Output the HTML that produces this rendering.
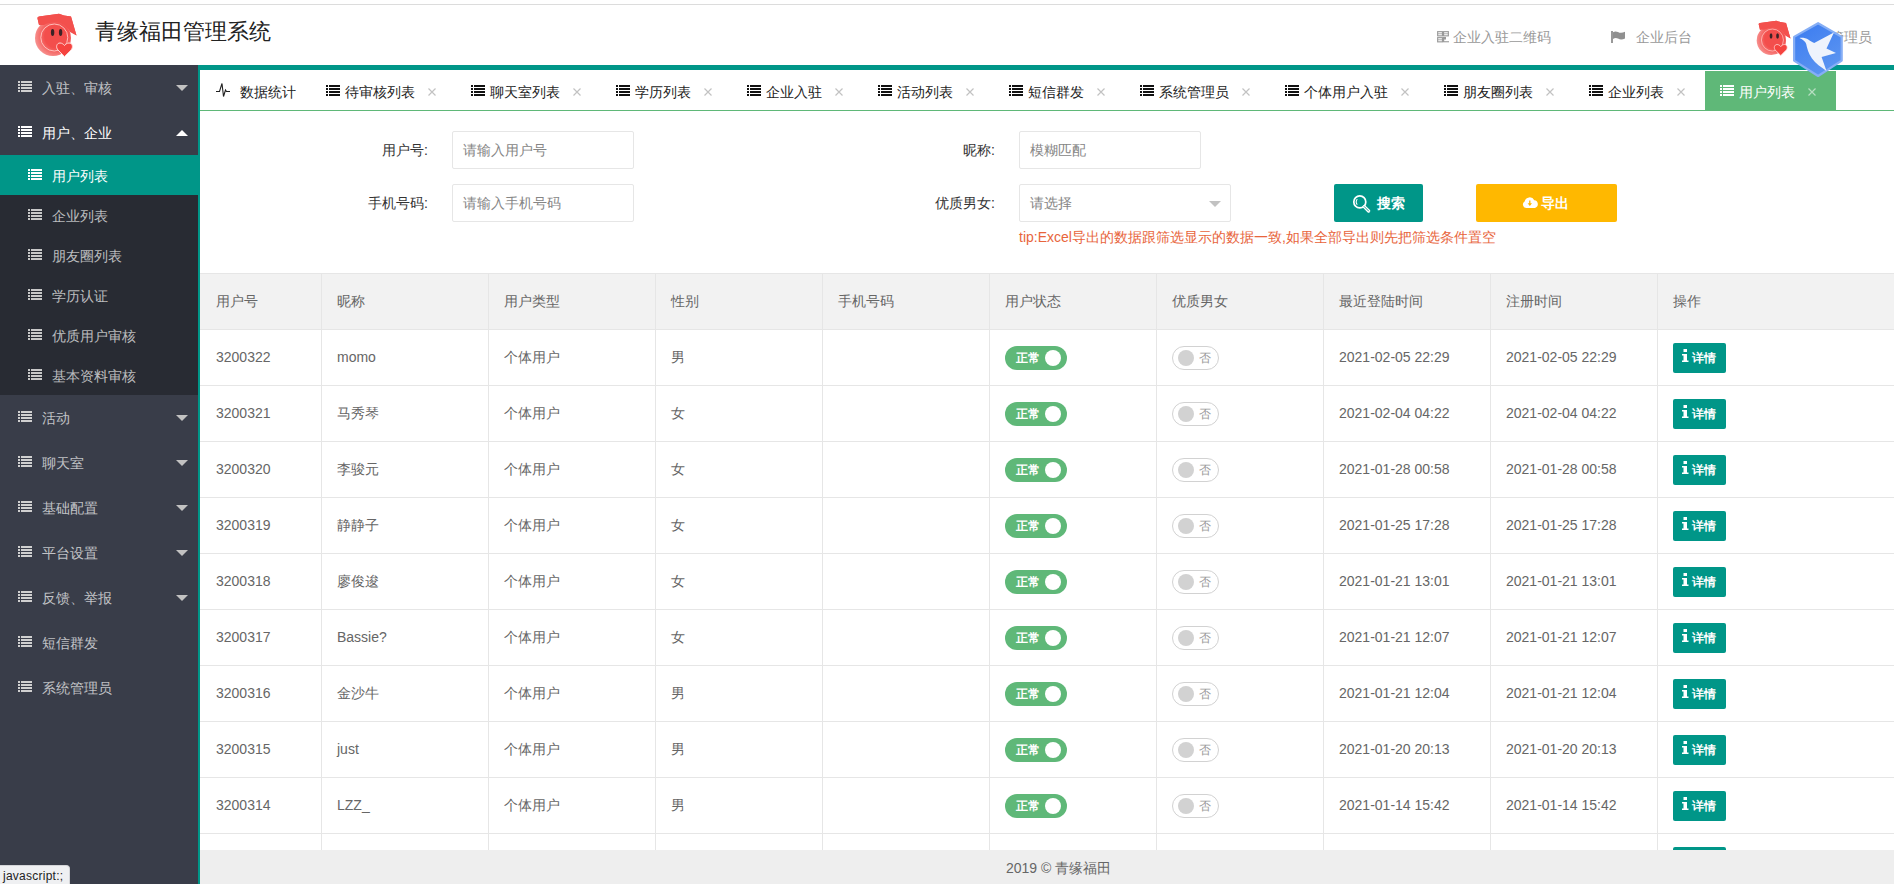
<!DOCTYPE html>
<html><head><meta charset="utf-8">
<style>
*{box-sizing:border-box;margin:0;padding:0}
html,body{width:1894px;height:884px;overflow:hidden;background:#fff;font-family:"Liberation Sans",sans-serif;font-size:14px;color:#333}
.abs{position:absolute}
#topline{position:absolute;left:0;top:4px;width:1894px;height:1px;background:#dcdcdc}
#title{position:absolute;left:95px;top:17px;font-size:22px;line-height:30px;color:#222;white-space:nowrap}
.hnav{position:absolute;top:28px;line-height:18px;color:#999;white-space:nowrap}
#side{position:absolute;left:0;top:65px;width:198px;height:819px;background:#393D49}
#tealL{position:absolute;left:198px;top:65px;width:2px;height:819px;background:#009688}
#tealT{position:absolute;left:198px;top:65px;width:1696px;height:5px;background:#009688}
.si{position:absolute;left:0;width:198px;height:45px;line-height:45px;color:rgba(255,255,255,.7);white-space:nowrap}
.si .ic{position:absolute;left:18px;top:16px}
.si .tx{position:absolute;left:42px;top:1px}
.si .ar{position:absolute;left:176px;top:20px;width:0;height:0;border-left:6px solid transparent;border-right:6px solid transparent;border-top:6px solid #c2c2c2}
.si .ar.up{border-top:0;border-bottom:6px solid #fff}
#child{position:absolute;left:0;top:155px;width:198px;height:240px;background:#282B33}
.ci{position:absolute;left:0;width:198px;height:40px;line-height:40px;color:rgba(255,255,255,.7);white-space:nowrap}
.ci .ic{position:absolute;left:28px;top:14px}
.ci .tx{position:absolute;left:52px;top:0.5px}
.ci.on{background:#009688;color:#fff}
#tabline{position:absolute;left:200px;top:110px;width:1694px;height:1px;background:#5FB878}
.tab{position:absolute;top:71px;height:39px;line-height:39px;color:#222;white-space:nowrap}
.tab .ic{position:absolute;left:15px;top:14px}
.tab .tx{position:absolute;left:34px;top:2px}
.tab .cl{position:absolute;top:17px;width:8px;height:8px}
.tab.on{background:#5FB878;color:#fff}
.lbl{position:absolute;line-height:20px;color:#333;white-space:nowrap;text-align:right}
.inp{position:absolute;height:38px;border:1px solid #e6e6e6;border-radius:2px;background:#fff;color:#858585;line-height:36px;padding-left:10px;white-space:nowrap}
.btn{position:absolute;top:184px;height:38px;border-radius:2px;color:#fff;line-height:38px;white-space:nowrap;font-weight:bold}
#tip{position:absolute;left:1019px;top:228px;line-height:18px;color:#e8653c;white-space:nowrap}
#tbl{position:absolute;left:200px;top:273px;width:1694px;height:577px;overflow:hidden}
#thead{position:absolute;left:0;top:0;width:1694px;height:57px;background:#f2f2f2;border-top:1px solid #e6e6e6;border-bottom:1px solid #e6e6e6}
.row{position:absolute;left:0;width:1694px;height:56px;border-bottom:1px solid #e6e6e6}
.vl{position:absolute;top:0;width:1px;height:577px;background:#e6e6e6}
.cell{position:absolute;line-height:20px;color:#666;white-space:nowrap}
.sw1{position:absolute;left:805px;width:62px;height:24px;border-radius:20px;background:#5FB878}
.sw1 em{position:absolute;left:11px;top:0;font-style:normal;font-size:12px;line-height:24px;color:#fff;font-weight:bold}
.sw1 i{position:absolute;left:40px;top:4px;width:16px;height:16px;border-radius:50%;background:#fff}
.sw2{position:absolute;left:972px;width:47px;height:24px;border-radius:20px;border:1px solid #d2d2d2;background:#fff}
.sw2 i{position:absolute;left:5px;top:3px;width:16px;height:16px;border-radius:50%;background:#d2d2d2}
.sw2 em{position:absolute;left:26px;top:0;font-style:normal;font-size:12px;line-height:22px;color:#999}
.det{position:absolute;left:1473px;width:53px;height:30px;border-radius:2px;background:#009688;color:#fff;font-size:12px;line-height:30px;font-weight:bold}
.det .ii{position:absolute;left:9px;top:6px}
.det span{position:absolute;left:19px;top:0}
#footer{position:absolute;left:200px;top:850px;width:1694px;height:34px;background:#eee;color:#666;line-height:34px}
#status{position:absolute;left:0;top:865px;width:70px;height:19px;padding:0 0 0 3px;background:#eff0f2;border:1px solid #d4d5d8;border-left:0;border-bottom:0;border-top-right-radius:4px;font-size:12px;letter-spacing:0.25px;line-height:20px;color:#222}
</style></head><body>
<div id="topline"></div>
<svg class="abs" style="left:28px;top:8px" width="54" height="54" viewBox="0 0 54 54"><defs><radialGradient id="fga" cx="0.6" cy="0.45" r="0.6"><stop offset="0.55" stop-color="#f34e4c"/><stop offset="1" stop-color="#f7908e"/></radialGradient></defs><path d="M9.5 10.5 Q9 9 11 8.6 L31 5.8 L36 7.5 L43 8.6 L48.5 27.5 L42 24 C38 16 28 12 18 15 L11 17 Z" fill="#f3504d"/><circle cx="25" cy="30" r="18" fill="url(#fga)"/><path d="M9.5 10.5 Q9 9 11 8.6 L31 5.8 L36 7.5 L43 8.6 L48.5 27.5 L41 22 C36 14 26 12 16 17 L11 17 Z" fill="#f3504d"/><circle cx="26.3" cy="29.5" r="13.5" fill="none" stroke="#ffc9c6" stroke-width="0.9"/><ellipse cx="24.6" cy="24.5" rx="1.7" ry="3.4" fill="#3b2326"/><ellipse cx="32.6" cy="24.5" rx="1.7" ry="3.4" fill="#3b2326"/><path d="M36.5 48.5 L30 42 C27.5 39.5 28.5 35 32 35 C34 35 35.5 36.3 36.5 37.5 C37.5 36.3 39 35 41 35 C44.5 35 45.5 39.5 43 42 Z" fill="#f5433f" stroke="#ffd6d4" stroke-width="1"/></svg>
<div id="title">青缘福田管理系统</div>
<svg class="abs" style="left:1437px;top:31px" width="12" height="12" viewBox="0 0 12 12"><g fill="none" stroke="#9a9a9a" stroke-width="1.15"><rect x="0.65" y="0.65" width="4.8" height="4.2"/><rect x="6.55" y="0.65" width="4.8" height="4.2"/><rect x="0.65" y="6.65" width="4.8" height="4.2"/></g><g fill="#9a9a9a"><rect x="1" y="2.4" width="4" height="0.8"/><rect x="7" y="2.4" width="4" height="0.8"/><rect x="1" y="8.4" width="4" height="0.8"/><rect x="6" y="6" width="3" height="2.5"/><rect x="6" y="10.2" width="6" height="1.1"/><rect x="6" y="6" width="1.2" height="5"/></g></svg>
<div class="hnav" style="left:1453px">企业入驻二维码</div>
<svg class="abs" style="left:1611px;top:31px" width="15" height="12" viewBox="0 0 15 12"><rect x="0" y="0" width="2" height="12" fill="#999"/><path d="M2 1.2 Q4.5 -0.3 7 1 Q10 2.8 14 0.8 L14 7.6 Q10 9.6 7 7.6 Q4.5 6.4 2 8 Z" fill="#909090"/></svg>
<div class="hnav" style="left:1636px">企业后台</div>
<svg class="abs" style="left:1751px;top:16px" width="44" height="44" viewBox="0 0 54 54"><defs><radialGradient id="fgb" cx="0.6" cy="0.45" r="0.6"><stop offset="0.55" stop-color="#f34e4c"/><stop offset="1" stop-color="#f7908e"/></radialGradient></defs><path d="M9.5 10.5 Q9 9 11 8.6 L31 5.8 L36 7.5 L43 8.6 L48.5 27.5 L42 24 C38 16 28 12 18 15 L11 17 Z" fill="#f3504d"/><circle cx="25" cy="30" r="18" fill="url(#fgb)"/><path d="M9.5 10.5 Q9 9 11 8.6 L31 5.8 L36 7.5 L43 8.6 L48.5 27.5 L41 22 C36 14 26 12 16 17 L11 17 Z" fill="#f3504d"/><circle cx="26.3" cy="29.5" r="13.5" fill="none" stroke="#ffc9c6" stroke-width="0.9"/><ellipse cx="24.6" cy="24.5" rx="1.7" ry="3.4" fill="#3b2326"/><ellipse cx="32.6" cy="24.5" rx="1.7" ry="3.4" fill="#3b2326"/><path d="M36.5 48.5 L30 42 C27.5 39.5 28.5 35 32 35 C34 35 35.5 36.3 36.5 37.5 C37.5 36.3 39 35 41 35 C44.5 35 45.5 39.5 43 42 Z" fill="#f5433f" stroke="#ffd6d4" stroke-width="1"/></svg>
<div class="hnav" style="left:1830px">管理员</div>
<div id="side"></div>
<div class="si" style="top:65px;"><svg class="ic" width="14" height="11" viewBox="0 0 14 11"><rect x="0" y="0" width="2" height="2" fill="#d0d0d0"/><rect x="3" y="0" width="11" height="2" fill="#d0d0d0"/><rect x="0" y="3" width="2" height="2" fill="#d0d0d0"/><rect x="3" y="3" width="11" height="2" fill="#d0d0d0"/><rect x="0" y="6" width="2" height="2" fill="#d0d0d0"/><rect x="3" y="6" width="11" height="2" fill="#d0d0d0"/><rect x="0" y="9" width="2" height="2" fill="#d0d0d0"/><rect x="3" y="9" width="11" height="2" fill="#d0d0d0"/></svg><span class="tx">入驻、审核</span><i class="ar "></i></div>
<div class="si" style="top:110px;color:#fff"><svg class="ic" width="14" height="11" viewBox="0 0 14 11"><rect x="0" y="0" width="2" height="2" fill="#fff"/><rect x="3" y="0" width="11" height="2" fill="#fff"/><rect x="0" y="3" width="2" height="2" fill="#fff"/><rect x="3" y="3" width="11" height="2" fill="#fff"/><rect x="0" y="6" width="2" height="2" fill="#fff"/><rect x="3" y="6" width="11" height="2" fill="#fff"/><rect x="0" y="9" width="2" height="2" fill="#fff"/><rect x="3" y="9" width="11" height="2" fill="#fff"/></svg><span class="tx">用户、企业</span><i class="ar up"></i></div>
<div id="child"></div>
<div class="ci on" style="top:155px"><svg class="ic" width="14" height="11" viewBox="0 0 14 11"><rect x="0" y="0" width="2" height="2" fill="#fff"/><rect x="3" y="0" width="11" height="2" fill="#fff"/><rect x="0" y="3" width="2" height="2" fill="#fff"/><rect x="3" y="3" width="11" height="2" fill="#fff"/><rect x="0" y="6" width="2" height="2" fill="#fff"/><rect x="3" y="6" width="11" height="2" fill="#fff"/><rect x="0" y="9" width="2" height="2" fill="#fff"/><rect x="3" y="9" width="11" height="2" fill="#fff"/></svg><span class="tx">用户列表</span></div>
<div class="ci" style="top:195px"><svg class="ic" width="14" height="11" viewBox="0 0 14 11"><rect x="0" y="0" width="2" height="2" fill="#c8c8c8"/><rect x="3" y="0" width="11" height="2" fill="#c8c8c8"/><rect x="0" y="3" width="2" height="2" fill="#c8c8c8"/><rect x="3" y="3" width="11" height="2" fill="#c8c8c8"/><rect x="0" y="6" width="2" height="2" fill="#c8c8c8"/><rect x="3" y="6" width="11" height="2" fill="#c8c8c8"/><rect x="0" y="9" width="2" height="2" fill="#c8c8c8"/><rect x="3" y="9" width="11" height="2" fill="#c8c8c8"/></svg><span class="tx">企业列表</span></div>
<div class="ci" style="top:235px"><svg class="ic" width="14" height="11" viewBox="0 0 14 11"><rect x="0" y="0" width="2" height="2" fill="#c8c8c8"/><rect x="3" y="0" width="11" height="2" fill="#c8c8c8"/><rect x="0" y="3" width="2" height="2" fill="#c8c8c8"/><rect x="3" y="3" width="11" height="2" fill="#c8c8c8"/><rect x="0" y="6" width="2" height="2" fill="#c8c8c8"/><rect x="3" y="6" width="11" height="2" fill="#c8c8c8"/><rect x="0" y="9" width="2" height="2" fill="#c8c8c8"/><rect x="3" y="9" width="11" height="2" fill="#c8c8c8"/></svg><span class="tx">朋友圈列表</span></div>
<div class="ci" style="top:275px"><svg class="ic" width="14" height="11" viewBox="0 0 14 11"><rect x="0" y="0" width="2" height="2" fill="#c8c8c8"/><rect x="3" y="0" width="11" height="2" fill="#c8c8c8"/><rect x="0" y="3" width="2" height="2" fill="#c8c8c8"/><rect x="3" y="3" width="11" height="2" fill="#c8c8c8"/><rect x="0" y="6" width="2" height="2" fill="#c8c8c8"/><rect x="3" y="6" width="11" height="2" fill="#c8c8c8"/><rect x="0" y="9" width="2" height="2" fill="#c8c8c8"/><rect x="3" y="9" width="11" height="2" fill="#c8c8c8"/></svg><span class="tx">学历认证</span></div>
<div class="ci" style="top:315px"><svg class="ic" width="14" height="11" viewBox="0 0 14 11"><rect x="0" y="0" width="2" height="2" fill="#c8c8c8"/><rect x="3" y="0" width="11" height="2" fill="#c8c8c8"/><rect x="0" y="3" width="2" height="2" fill="#c8c8c8"/><rect x="3" y="3" width="11" height="2" fill="#c8c8c8"/><rect x="0" y="6" width="2" height="2" fill="#c8c8c8"/><rect x="3" y="6" width="11" height="2" fill="#c8c8c8"/><rect x="0" y="9" width="2" height="2" fill="#c8c8c8"/><rect x="3" y="9" width="11" height="2" fill="#c8c8c8"/></svg><span class="tx">优质用户审核</span></div>
<div class="ci" style="top:355px"><svg class="ic" width="14" height="11" viewBox="0 0 14 11"><rect x="0" y="0" width="2" height="2" fill="#c8c8c8"/><rect x="3" y="0" width="11" height="2" fill="#c8c8c8"/><rect x="0" y="3" width="2" height="2" fill="#c8c8c8"/><rect x="3" y="3" width="11" height="2" fill="#c8c8c8"/><rect x="0" y="6" width="2" height="2" fill="#c8c8c8"/><rect x="3" y="6" width="11" height="2" fill="#c8c8c8"/><rect x="0" y="9" width="2" height="2" fill="#c8c8c8"/><rect x="3" y="9" width="11" height="2" fill="#c8c8c8"/></svg><span class="tx">基本资料审核</span></div>
<div class="si" style="top:395px"><svg class="ic" width="14" height="11" viewBox="0 0 14 11"><rect x="0" y="0" width="2" height="2" fill="#d0d0d0"/><rect x="3" y="0" width="11" height="2" fill="#d0d0d0"/><rect x="0" y="3" width="2" height="2" fill="#d0d0d0"/><rect x="3" y="3" width="11" height="2" fill="#d0d0d0"/><rect x="0" y="6" width="2" height="2" fill="#d0d0d0"/><rect x="3" y="6" width="11" height="2" fill="#d0d0d0"/><rect x="0" y="9" width="2" height="2" fill="#d0d0d0"/><rect x="3" y="9" width="11" height="2" fill="#d0d0d0"/></svg><span class="tx">活动</span><i class="ar"></i></div>
<div class="si" style="top:440px"><svg class="ic" width="14" height="11" viewBox="0 0 14 11"><rect x="0" y="0" width="2" height="2" fill="#d0d0d0"/><rect x="3" y="0" width="11" height="2" fill="#d0d0d0"/><rect x="0" y="3" width="2" height="2" fill="#d0d0d0"/><rect x="3" y="3" width="11" height="2" fill="#d0d0d0"/><rect x="0" y="6" width="2" height="2" fill="#d0d0d0"/><rect x="3" y="6" width="11" height="2" fill="#d0d0d0"/><rect x="0" y="9" width="2" height="2" fill="#d0d0d0"/><rect x="3" y="9" width="11" height="2" fill="#d0d0d0"/></svg><span class="tx">聊天室</span><i class="ar"></i></div>
<div class="si" style="top:485px"><svg class="ic" width="14" height="11" viewBox="0 0 14 11"><rect x="0" y="0" width="2" height="2" fill="#d0d0d0"/><rect x="3" y="0" width="11" height="2" fill="#d0d0d0"/><rect x="0" y="3" width="2" height="2" fill="#d0d0d0"/><rect x="3" y="3" width="11" height="2" fill="#d0d0d0"/><rect x="0" y="6" width="2" height="2" fill="#d0d0d0"/><rect x="3" y="6" width="11" height="2" fill="#d0d0d0"/><rect x="0" y="9" width="2" height="2" fill="#d0d0d0"/><rect x="3" y="9" width="11" height="2" fill="#d0d0d0"/></svg><span class="tx">基础配置</span><i class="ar"></i></div>
<div class="si" style="top:530px"><svg class="ic" width="14" height="11" viewBox="0 0 14 11"><rect x="0" y="0" width="2" height="2" fill="#d0d0d0"/><rect x="3" y="0" width="11" height="2" fill="#d0d0d0"/><rect x="0" y="3" width="2" height="2" fill="#d0d0d0"/><rect x="3" y="3" width="11" height="2" fill="#d0d0d0"/><rect x="0" y="6" width="2" height="2" fill="#d0d0d0"/><rect x="3" y="6" width="11" height="2" fill="#d0d0d0"/><rect x="0" y="9" width="2" height="2" fill="#d0d0d0"/><rect x="3" y="9" width="11" height="2" fill="#d0d0d0"/></svg><span class="tx">平台设置</span><i class="ar"></i></div>
<div class="si" style="top:575px"><svg class="ic" width="14" height="11" viewBox="0 0 14 11"><rect x="0" y="0" width="2" height="2" fill="#d0d0d0"/><rect x="3" y="0" width="11" height="2" fill="#d0d0d0"/><rect x="0" y="3" width="2" height="2" fill="#d0d0d0"/><rect x="3" y="3" width="11" height="2" fill="#d0d0d0"/><rect x="0" y="6" width="2" height="2" fill="#d0d0d0"/><rect x="3" y="6" width="11" height="2" fill="#d0d0d0"/><rect x="0" y="9" width="2" height="2" fill="#d0d0d0"/><rect x="3" y="9" width="11" height="2" fill="#d0d0d0"/></svg><span class="tx">反馈、举报</span><i class="ar"></i></div>
<div class="si" style="top:620px"><svg class="ic" width="14" height="11" viewBox="0 0 14 11"><rect x="0" y="0" width="2" height="2" fill="#d0d0d0"/><rect x="3" y="0" width="11" height="2" fill="#d0d0d0"/><rect x="0" y="3" width="2" height="2" fill="#d0d0d0"/><rect x="3" y="3" width="11" height="2" fill="#d0d0d0"/><rect x="0" y="6" width="2" height="2" fill="#d0d0d0"/><rect x="3" y="6" width="11" height="2" fill="#d0d0d0"/><rect x="0" y="9" width="2" height="2" fill="#d0d0d0"/><rect x="3" y="9" width="11" height="2" fill="#d0d0d0"/></svg><span class="tx">短信群发</span></div>
<div class="si" style="top:665px"><svg class="ic" width="14" height="11" viewBox="0 0 14 11"><rect x="0" y="0" width="2" height="2" fill="#d0d0d0"/><rect x="3" y="0" width="11" height="2" fill="#d0d0d0"/><rect x="0" y="3" width="2" height="2" fill="#d0d0d0"/><rect x="3" y="3" width="11" height="2" fill="#d0d0d0"/><rect x="0" y="6" width="2" height="2" fill="#d0d0d0"/><rect x="3" y="6" width="11" height="2" fill="#d0d0d0"/><rect x="0" y="9" width="2" height="2" fill="#d0d0d0"/><rect x="3" y="9" width="11" height="2" fill="#d0d0d0"/></svg><span class="tx">系统管理员</span></div>
<div id="tealL"></div><div id="tealT"></div>
<div id="tabline"></div>
<svg class="abs" style="left:216px;top:83px" width="14" height="14" viewBox="0 0 14 14"><path d="M0 8.5 H3.5 L6 0.5 L7.5 13.5 L9.5 7 L10.5 8.5 H14" fill="none" stroke="#222" stroke-width="1.1"/></svg>
<div class="tab" style="left:201px;width:110px"><span class="tx" style="left:39px">数据统计</span></div>
<div class="tab" style="left:311px;width:145px"><svg class="ic" width="14" height="11" viewBox="0 0 14 11"><rect x="0" y="0" width="2" height="2" fill="#111"/><rect x="3" y="0" width="11" height="2" fill="#111"/><rect x="0" y="3" width="2" height="2" fill="#111"/><rect x="3" y="3" width="11" height="2" fill="#111"/><rect x="0" y="6" width="2" height="2" fill="#111"/><rect x="3" y="6" width="11" height="2" fill="#111"/><rect x="0" y="9" width="2" height="2" fill="#111"/><rect x="3" y="9" width="11" height="2" fill="#111"/></svg><span class="tx">待审核列表</span><svg class="cl" style="left:117px" viewBox="0 0 8 8"><path d="M0.5 0.5 L7.5 7.5 M7.5 0.5 L0.5 7.5" stroke="#c2c2c2" stroke-width="1.2"/></svg></div>
<div class="tab" style="left:456px;width:145px"><svg class="ic" width="14" height="11" viewBox="0 0 14 11"><rect x="0" y="0" width="2" height="2" fill="#111"/><rect x="3" y="0" width="11" height="2" fill="#111"/><rect x="0" y="3" width="2" height="2" fill="#111"/><rect x="3" y="3" width="11" height="2" fill="#111"/><rect x="0" y="6" width="2" height="2" fill="#111"/><rect x="3" y="6" width="11" height="2" fill="#111"/><rect x="0" y="9" width="2" height="2" fill="#111"/><rect x="3" y="9" width="11" height="2" fill="#111"/></svg><span class="tx">聊天室列表</span><svg class="cl" style="left:117px" viewBox="0 0 8 8"><path d="M0.5 0.5 L7.5 7.5 M7.5 0.5 L0.5 7.5" stroke="#c2c2c2" stroke-width="1.2"/></svg></div>
<div class="tab" style="left:601px;width:131px"><svg class="ic" width="14" height="11" viewBox="0 0 14 11"><rect x="0" y="0" width="2" height="2" fill="#111"/><rect x="3" y="0" width="11" height="2" fill="#111"/><rect x="0" y="3" width="2" height="2" fill="#111"/><rect x="3" y="3" width="11" height="2" fill="#111"/><rect x="0" y="6" width="2" height="2" fill="#111"/><rect x="3" y="6" width="11" height="2" fill="#111"/><rect x="0" y="9" width="2" height="2" fill="#111"/><rect x="3" y="9" width="11" height="2" fill="#111"/></svg><span class="tx">学历列表</span><svg class="cl" style="left:103px" viewBox="0 0 8 8"><path d="M0.5 0.5 L7.5 7.5 M7.5 0.5 L0.5 7.5" stroke="#c2c2c2" stroke-width="1.2"/></svg></div>
<div class="tab" style="left:732px;width:131px"><svg class="ic" width="14" height="11" viewBox="0 0 14 11"><rect x="0" y="0" width="2" height="2" fill="#111"/><rect x="3" y="0" width="11" height="2" fill="#111"/><rect x="0" y="3" width="2" height="2" fill="#111"/><rect x="3" y="3" width="11" height="2" fill="#111"/><rect x="0" y="6" width="2" height="2" fill="#111"/><rect x="3" y="6" width="11" height="2" fill="#111"/><rect x="0" y="9" width="2" height="2" fill="#111"/><rect x="3" y="9" width="11" height="2" fill="#111"/></svg><span class="tx">企业入驻</span><svg class="cl" style="left:103px" viewBox="0 0 8 8"><path d="M0.5 0.5 L7.5 7.5 M7.5 0.5 L0.5 7.5" stroke="#c2c2c2" stroke-width="1.2"/></svg></div>
<div class="tab" style="left:863px;width:131px"><svg class="ic" width="14" height="11" viewBox="0 0 14 11"><rect x="0" y="0" width="2" height="2" fill="#111"/><rect x="3" y="0" width="11" height="2" fill="#111"/><rect x="0" y="3" width="2" height="2" fill="#111"/><rect x="3" y="3" width="11" height="2" fill="#111"/><rect x="0" y="6" width="2" height="2" fill="#111"/><rect x="3" y="6" width="11" height="2" fill="#111"/><rect x="0" y="9" width="2" height="2" fill="#111"/><rect x="3" y="9" width="11" height="2" fill="#111"/></svg><span class="tx">活动列表</span><svg class="cl" style="left:103px" viewBox="0 0 8 8"><path d="M0.5 0.5 L7.5 7.5 M7.5 0.5 L0.5 7.5" stroke="#c2c2c2" stroke-width="1.2"/></svg></div>
<div class="tab" style="left:994px;width:131px"><svg class="ic" width="14" height="11" viewBox="0 0 14 11"><rect x="0" y="0" width="2" height="2" fill="#111"/><rect x="3" y="0" width="11" height="2" fill="#111"/><rect x="0" y="3" width="2" height="2" fill="#111"/><rect x="3" y="3" width="11" height="2" fill="#111"/><rect x="0" y="6" width="2" height="2" fill="#111"/><rect x="3" y="6" width="11" height="2" fill="#111"/><rect x="0" y="9" width="2" height="2" fill="#111"/><rect x="3" y="9" width="11" height="2" fill="#111"/></svg><span class="tx">短信群发</span><svg class="cl" style="left:103px" viewBox="0 0 8 8"><path d="M0.5 0.5 L7.5 7.5 M7.5 0.5 L0.5 7.5" stroke="#c2c2c2" stroke-width="1.2"/></svg></div>
<div class="tab" style="left:1125px;width:145px"><svg class="ic" width="14" height="11" viewBox="0 0 14 11"><rect x="0" y="0" width="2" height="2" fill="#111"/><rect x="3" y="0" width="11" height="2" fill="#111"/><rect x="0" y="3" width="2" height="2" fill="#111"/><rect x="3" y="3" width="11" height="2" fill="#111"/><rect x="0" y="6" width="2" height="2" fill="#111"/><rect x="3" y="6" width="11" height="2" fill="#111"/><rect x="0" y="9" width="2" height="2" fill="#111"/><rect x="3" y="9" width="11" height="2" fill="#111"/></svg><span class="tx">系统管理员</span><svg class="cl" style="left:117px" viewBox="0 0 8 8"><path d="M0.5 0.5 L7.5 7.5 M7.5 0.5 L0.5 7.5" stroke="#c2c2c2" stroke-width="1.2"/></svg></div>
<div class="tab" style="left:1270px;width:159px"><svg class="ic" width="14" height="11" viewBox="0 0 14 11"><rect x="0" y="0" width="2" height="2" fill="#111"/><rect x="3" y="0" width="11" height="2" fill="#111"/><rect x="0" y="3" width="2" height="2" fill="#111"/><rect x="3" y="3" width="11" height="2" fill="#111"/><rect x="0" y="6" width="2" height="2" fill="#111"/><rect x="3" y="6" width="11" height="2" fill="#111"/><rect x="0" y="9" width="2" height="2" fill="#111"/><rect x="3" y="9" width="11" height="2" fill="#111"/></svg><span class="tx">个体用户入驻</span><svg class="cl" style="left:131px" viewBox="0 0 8 8"><path d="M0.5 0.5 L7.5 7.5 M7.5 0.5 L0.5 7.5" stroke="#c2c2c2" stroke-width="1.2"/></svg></div>
<div class="tab" style="left:1429px;width:145px"><svg class="ic" width="14" height="11" viewBox="0 0 14 11"><rect x="0" y="0" width="2" height="2" fill="#111"/><rect x="3" y="0" width="11" height="2" fill="#111"/><rect x="0" y="3" width="2" height="2" fill="#111"/><rect x="3" y="3" width="11" height="2" fill="#111"/><rect x="0" y="6" width="2" height="2" fill="#111"/><rect x="3" y="6" width="11" height="2" fill="#111"/><rect x="0" y="9" width="2" height="2" fill="#111"/><rect x="3" y="9" width="11" height="2" fill="#111"/></svg><span class="tx">朋友圈列表</span><svg class="cl" style="left:117px" viewBox="0 0 8 8"><path d="M0.5 0.5 L7.5 7.5 M7.5 0.5 L0.5 7.5" stroke="#c2c2c2" stroke-width="1.2"/></svg></div>
<div class="tab" style="left:1574px;width:131px"><svg class="ic" width="14" height="11" viewBox="0 0 14 11"><rect x="0" y="0" width="2" height="2" fill="#111"/><rect x="3" y="0" width="11" height="2" fill="#111"/><rect x="0" y="3" width="2" height="2" fill="#111"/><rect x="3" y="3" width="11" height="2" fill="#111"/><rect x="0" y="6" width="2" height="2" fill="#111"/><rect x="3" y="6" width="11" height="2" fill="#111"/><rect x="0" y="9" width="2" height="2" fill="#111"/><rect x="3" y="9" width="11" height="2" fill="#111"/></svg><span class="tx">企业列表</span><svg class="cl" style="left:103px" viewBox="0 0 8 8"><path d="M0.5 0.5 L7.5 7.5 M7.5 0.5 L0.5 7.5" stroke="#c2c2c2" stroke-width="1.2"/></svg></div>
<div class="tab on" style="left:1705px;width:131px"><svg class="ic" width="14" height="11" viewBox="0 0 14 11"><rect x="0" y="0" width="2" height="2" fill="#fff"/><rect x="3" y="0" width="11" height="2" fill="#fff"/><rect x="0" y="3" width="2" height="2" fill="#fff"/><rect x="3" y="3" width="11" height="2" fill="#fff"/><rect x="0" y="6" width="2" height="2" fill="#fff"/><rect x="3" y="6" width="11" height="2" fill="#fff"/><rect x="0" y="9" width="2" height="2" fill="#fff"/><rect x="3" y="9" width="11" height="2" fill="#fff"/></svg><span class="tx">用户列表</span><svg class="cl" style="left:103px" viewBox="0 0 8 8"><path d="M0.5 0.5 L7.5 7.5 M7.5 0.5 L0.5 7.5" stroke="rgba(255,255,255,.55)" stroke-width="1.2"/></svg></div>
<div class="lbl" style="left:328px;width:100px;top:140px">用户号:</div>
<div class="inp" style="left:452px;top:131px;width:182px">请输入用户号</div>
<div class="lbl" style="left:328px;width:100px;top:193px">手机号码:</div>
<div class="inp" style="left:452px;top:184px;width:182px">请输入手机号码</div>
<div class="lbl" style="left:895px;width:100px;top:140px">昵称:</div>
<div class="inp" style="left:1019px;top:131px;width:182px">模糊匹配</div>
<div class="lbl" style="left:895px;width:100px;top:193px">优质男女:</div>
<div class="inp" style="left:1019px;top:184px;width:212px">请选择<i style="position:absolute;left:189px;top:16px;width:0;height:0;border-left:6px solid transparent;border-right:6px solid transparent;border-top:6px solid #c2c2c2"></i></div>
<div class="btn" style="left:1334px;width:89px;background:#009688"><svg class="abs" style="left:18px;top:10px" width="19" height="19" viewBox="0 0 19 19"><circle cx="7.8" cy="7.9" r="6" fill="none" stroke="#fff" stroke-width="1.7"/><path d="M12.2 12.6 L16.6 17" stroke="#fff" stroke-width="3.2" stroke-linecap="round"/><path d="M12.2 12.6 L16.6 17" stroke="#009688" stroke-width="0.9" stroke-linecap="round"/><path d="M5.3 10.6 A3.8 3.8 0 0 1 5.3 5.2" fill="none" stroke="#fff" stroke-width="1.1"/></svg><span class="abs" style="left:43px;top:0">搜索</span></div>
<div class="btn" style="left:1476px;width:141px;background:#FFB800"><svg class="abs" style="left:46px;top:12px" width="17" height="13" viewBox="0 0 17 13"><path d="M4 12 A3.6 3.6 0 0 1 2.6 5.4 A5.2 5.2 0 0 1 12.3 4.2 A4 4 0 0 1 13 12 Z" fill="#fff"/><path d="M7.8 4.5 V8.5" stroke="#FFB800" stroke-width="1.3"/><path d="M5.6 7.3 H10 L7.8 10 Z" fill="#FFB800"/></svg><span class="abs" style="left:65px;top:0">导出</span></div>
<div id="tip">tip:Excel导出的数据跟筛选显示的数据一致,如果全部导出则先把筛选条件置空</div>
<div id="tbl">
<div id="thead"></div>
<div class="cell" style="left:16px;top:18px">用户号</div>
<div class="cell" style="left:137px;top:18px">昵称</div>
<div class="cell" style="left:304px;top:18px">用户类型</div>
<div class="cell" style="left:471px;top:18px">性别</div>
<div class="cell" style="left:638px;top:18px">手机号码</div>
<div class="cell" style="left:805px;top:18px">用户状态</div>
<div class="cell" style="left:972px;top:18px">优质男女</div>
<div class="cell" style="left:1139px;top:18px">最近登陆时间</div>
<div class="cell" style="left:1306px;top:18px">注册时间</div>
<div class="cell" style="left:1473px;top:18px">操作</div>
<div class="row" style="top:57px"></div>
<div class="cell" style="left:16px;top:74px">3200322</div>
<div class="cell" style="left:137px;top:74px">momo</div>
<div class="cell" style="left:304px;top:74px">个体用户</div>
<div class="cell" style="left:471px;top:74px">男</div>
<div class="cell" style="left:1139px;top:74px">2021-02-05 22:29</div>
<div class="cell" style="left:1306px;top:74px">2021-02-05 22:29</div>
<div class="sw1" style="top:73px"><em>正常</em><i></i></div>
<div class="sw2" style="top:73px"><i></i><em>否</em></div>
<div class="det" style="top:70px"><svg class="ii" width="7" height="14" viewBox="0 0 7 14"><rect x="1.5" y="0" width="3.5" height="3" fill="#fff"/><path d="M0 5 H5 V11.5 H6.5 V13 H0 V11.5 H1.5 V6.5 H0 Z" fill="#fff"/></svg><span>详情</span></div>
<div class="row" style="top:113px"></div>
<div class="cell" style="left:16px;top:130px">3200321</div>
<div class="cell" style="left:137px;top:130px">马秀琴</div>
<div class="cell" style="left:304px;top:130px">个体用户</div>
<div class="cell" style="left:471px;top:130px">女</div>
<div class="cell" style="left:1139px;top:130px">2021-02-04 04:22</div>
<div class="cell" style="left:1306px;top:130px">2021-02-04 04:22</div>
<div class="sw1" style="top:129px"><em>正常</em><i></i></div>
<div class="sw2" style="top:129px"><i></i><em>否</em></div>
<div class="det" style="top:126px"><svg class="ii" width="7" height="14" viewBox="0 0 7 14"><rect x="1.5" y="0" width="3.5" height="3" fill="#fff"/><path d="M0 5 H5 V11.5 H6.5 V13 H0 V11.5 H1.5 V6.5 H0 Z" fill="#fff"/></svg><span>详情</span></div>
<div class="row" style="top:169px"></div>
<div class="cell" style="left:16px;top:186px">3200320</div>
<div class="cell" style="left:137px;top:186px">李骏元</div>
<div class="cell" style="left:304px;top:186px">个体用户</div>
<div class="cell" style="left:471px;top:186px">女</div>
<div class="cell" style="left:1139px;top:186px">2021-01-28 00:58</div>
<div class="cell" style="left:1306px;top:186px">2021-01-28 00:58</div>
<div class="sw1" style="top:185px"><em>正常</em><i></i></div>
<div class="sw2" style="top:185px"><i></i><em>否</em></div>
<div class="det" style="top:182px"><svg class="ii" width="7" height="14" viewBox="0 0 7 14"><rect x="1.5" y="0" width="3.5" height="3" fill="#fff"/><path d="M0 5 H5 V11.5 H6.5 V13 H0 V11.5 H1.5 V6.5 H0 Z" fill="#fff"/></svg><span>详情</span></div>
<div class="row" style="top:225px"></div>
<div class="cell" style="left:16px;top:242px">3200319</div>
<div class="cell" style="left:137px;top:242px">静静子</div>
<div class="cell" style="left:304px;top:242px">个体用户</div>
<div class="cell" style="left:471px;top:242px">女</div>
<div class="cell" style="left:1139px;top:242px">2021-01-25 17:28</div>
<div class="cell" style="left:1306px;top:242px">2021-01-25 17:28</div>
<div class="sw1" style="top:241px"><em>正常</em><i></i></div>
<div class="sw2" style="top:241px"><i></i><em>否</em></div>
<div class="det" style="top:238px"><svg class="ii" width="7" height="14" viewBox="0 0 7 14"><rect x="1.5" y="0" width="3.5" height="3" fill="#fff"/><path d="M0 5 H5 V11.5 H6.5 V13 H0 V11.5 H1.5 V6.5 H0 Z" fill="#fff"/></svg><span>详情</span></div>
<div class="row" style="top:281px"></div>
<div class="cell" style="left:16px;top:298px">3200318</div>
<div class="cell" style="left:137px;top:298px">廖俊逡</div>
<div class="cell" style="left:304px;top:298px">个体用户</div>
<div class="cell" style="left:471px;top:298px">女</div>
<div class="cell" style="left:1139px;top:298px">2021-01-21 13:01</div>
<div class="cell" style="left:1306px;top:298px">2021-01-21 13:01</div>
<div class="sw1" style="top:297px"><em>正常</em><i></i></div>
<div class="sw2" style="top:297px"><i></i><em>否</em></div>
<div class="det" style="top:294px"><svg class="ii" width="7" height="14" viewBox="0 0 7 14"><rect x="1.5" y="0" width="3.5" height="3" fill="#fff"/><path d="M0 5 H5 V11.5 H6.5 V13 H0 V11.5 H1.5 V6.5 H0 Z" fill="#fff"/></svg><span>详情</span></div>
<div class="row" style="top:337px"></div>
<div class="cell" style="left:16px;top:354px">3200317</div>
<div class="cell" style="left:137px;top:354px">Bassie?</div>
<div class="cell" style="left:304px;top:354px">个体用户</div>
<div class="cell" style="left:471px;top:354px">女</div>
<div class="cell" style="left:1139px;top:354px">2021-01-21 12:07</div>
<div class="cell" style="left:1306px;top:354px">2021-01-21 12:07</div>
<div class="sw1" style="top:353px"><em>正常</em><i></i></div>
<div class="sw2" style="top:353px"><i></i><em>否</em></div>
<div class="det" style="top:350px"><svg class="ii" width="7" height="14" viewBox="0 0 7 14"><rect x="1.5" y="0" width="3.5" height="3" fill="#fff"/><path d="M0 5 H5 V11.5 H6.5 V13 H0 V11.5 H1.5 V6.5 H0 Z" fill="#fff"/></svg><span>详情</span></div>
<div class="row" style="top:393px"></div>
<div class="cell" style="left:16px;top:410px">3200316</div>
<div class="cell" style="left:137px;top:410px">金沙牛</div>
<div class="cell" style="left:304px;top:410px">个体用户</div>
<div class="cell" style="left:471px;top:410px">男</div>
<div class="cell" style="left:1139px;top:410px">2021-01-21 12:04</div>
<div class="cell" style="left:1306px;top:410px">2021-01-21 12:04</div>
<div class="sw1" style="top:409px"><em>正常</em><i></i></div>
<div class="sw2" style="top:409px"><i></i><em>否</em></div>
<div class="det" style="top:406px"><svg class="ii" width="7" height="14" viewBox="0 0 7 14"><rect x="1.5" y="0" width="3.5" height="3" fill="#fff"/><path d="M0 5 H5 V11.5 H6.5 V13 H0 V11.5 H1.5 V6.5 H0 Z" fill="#fff"/></svg><span>详情</span></div>
<div class="row" style="top:449px"></div>
<div class="cell" style="left:16px;top:466px">3200315</div>
<div class="cell" style="left:137px;top:466px">just</div>
<div class="cell" style="left:304px;top:466px">个体用户</div>
<div class="cell" style="left:471px;top:466px">男</div>
<div class="cell" style="left:1139px;top:466px">2021-01-20 20:13</div>
<div class="cell" style="left:1306px;top:466px">2021-01-20 20:13</div>
<div class="sw1" style="top:465px"><em>正常</em><i></i></div>
<div class="sw2" style="top:465px"><i></i><em>否</em></div>
<div class="det" style="top:462px"><svg class="ii" width="7" height="14" viewBox="0 0 7 14"><rect x="1.5" y="0" width="3.5" height="3" fill="#fff"/><path d="M0 5 H5 V11.5 H6.5 V13 H0 V11.5 H1.5 V6.5 H0 Z" fill="#fff"/></svg><span>详情</span></div>
<div class="row" style="top:505px"></div>
<div class="cell" style="left:16px;top:522px">3200314</div>
<div class="cell" style="left:137px;top:522px">LZZ_</div>
<div class="cell" style="left:304px;top:522px">个体用户</div>
<div class="cell" style="left:471px;top:522px">男</div>
<div class="cell" style="left:1139px;top:522px">2021-01-14 15:42</div>
<div class="cell" style="left:1306px;top:522px">2021-01-14 15:42</div>
<div class="sw1" style="top:521px"><em>正常</em><i></i></div>
<div class="sw2" style="top:521px"><i></i><em>否</em></div>
<div class="det" style="top:518px"><svg class="ii" width="7" height="14" viewBox="0 0 7 14"><rect x="1.5" y="0" width="3.5" height="3" fill="#fff"/><path d="M0 5 H5 V11.5 H6.5 V13 H0 V11.5 H1.5 V6.5 H0 Z" fill="#fff"/></svg><span>详情</span></div>
<div class="row" style="top:561px"></div>
<div class="sw1" style="top:577px"><em>正常</em><i></i></div>
<div class="sw2" style="top:577px"><i></i><em>否</em></div>
<div class="det" style="top:574px"><svg class="ii" width="7" height="14" viewBox="0 0 7 14"><rect x="1.5" y="0" width="3.5" height="3" fill="#fff"/><path d="M0 5 H5 V11.5 H6.5 V13 H0 V11.5 H1.5 V6.5 H0 Z" fill="#fff"/></svg><span>详情</span></div>
<div class="vl" style="left:121px"></div>
<div class="vl" style="left:288px"></div>
<div class="vl" style="left:455px"></div>
<div class="vl" style="left:622px"></div>
<div class="vl" style="left:789px"></div>
<div class="vl" style="left:956px"></div>
<div class="vl" style="left:1123px"></div>
<div class="vl" style="left:1290px"></div>
<div class="vl" style="left:1457px"></div>
</div>
<svg class="abs" style="left:1792px;top:21px" width="52" height="57" viewBox="0 0 52 57"><defs><linearGradient id="hg" x1="0.2" y1="0" x2="0.8" y2="1"><stop offset="0" stop-color="#3d7df0"/><stop offset="1" stop-color="#5f97f1"/></linearGradient></defs><path d="M26.1 2.2 L49.7 15.9 V39.6 L26.1 55 L2.1 39.6 V15.9 Z" fill="url(#hg)" stroke="#86aef5" stroke-width="2.2" stroke-linejoin="round"/><path d="M7.5 17 C10 16.6 14 17 16.6 18.8 C18.5 20 20 21.5 22.2 21.9 L41.9 11.4 L34.5 27.5 L44 32.1 L29.6 36 L34.5 50 C29 46 23.5 42.5 20 37.5 C16.5 32.5 15 27 14.2 23 C13.5 20.5 11 18.5 7.5 17 Z" fill="#eef3fc"/></svg>
<div id="footer"><span class="abs" style="left:806px;top:1px">2019 © 青缘福田</span></div>
<div id="status">javascript:;</div>
</body></html>
